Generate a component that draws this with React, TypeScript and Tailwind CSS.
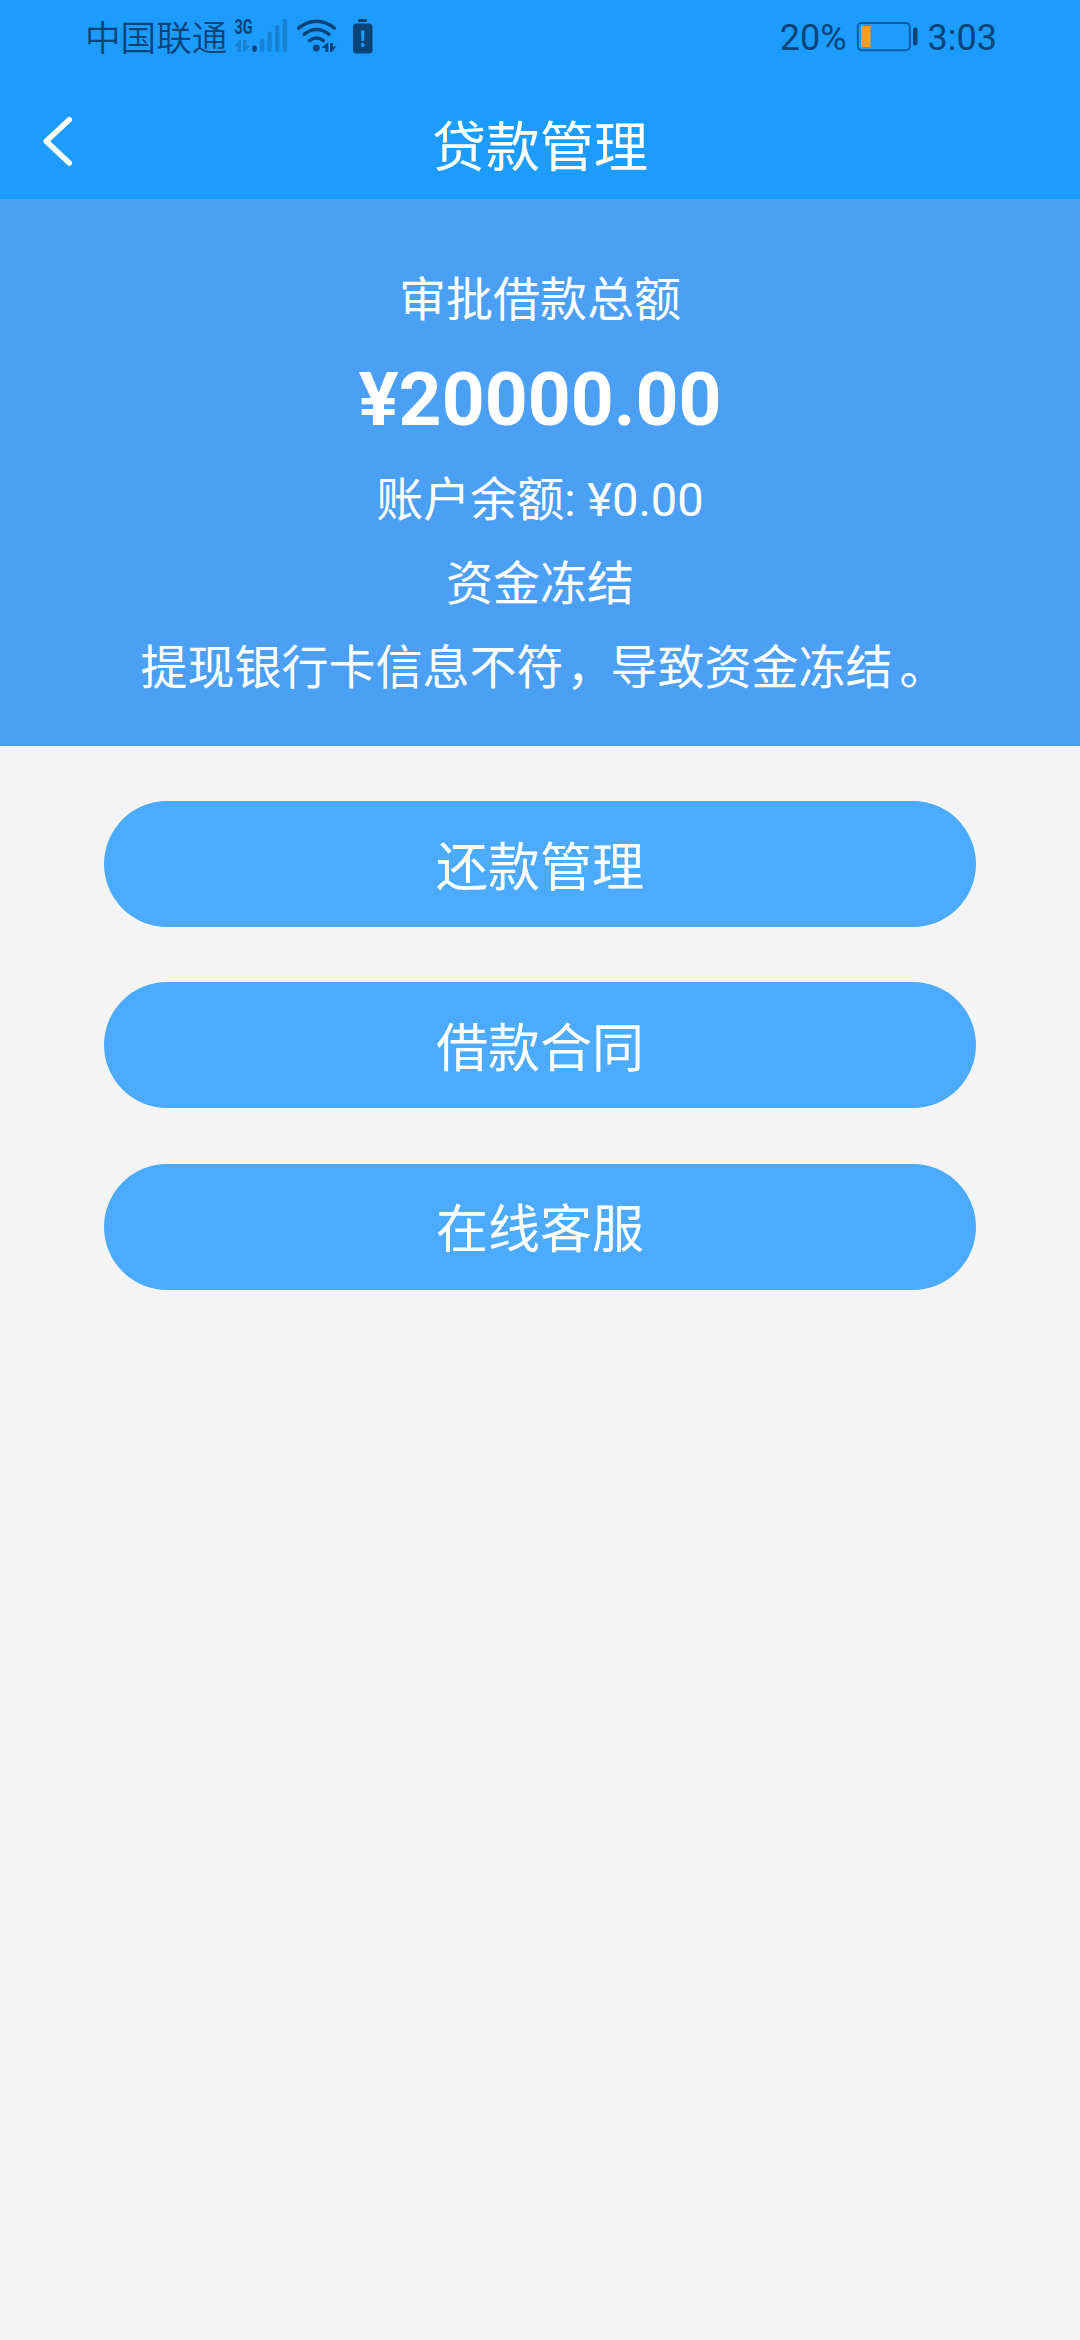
import React from 'react';

const CJK = "font-['Roboto','Noto_Sans_CJK_SC',sans-serif]";

function SignalIcons() {
  return (
    <svg className="ml-[6px] h-[60px] w-[140px]" viewBox="233 0 140 60" fill="none">
      <text x="234.5" y="34" fontFamily="Roboto" fontWeight="700" fontSize="20" textLength="18" lengthAdjust="spacingAndGlyphs" fill="#0b4477">3G</text>
      <g fill="#1781d3">
        <path d="M234 46.500L239.500 40H241V52H237.500V46.500zM243 40H246.500V45.500H250.500L244.500 52H243z" />
        <rect x="260" y="38.500" width="4.500" height="13.500" rx="2" />
        <rect x="267.300" y="31.700" width="4.500" height="20.300" rx="2" />
        <rect x="275" y="25" width="4.500" height="27" rx="2" />
        <rect x="282.700" y="19" width="4.500" height="33" rx="2" />
      </g>
      <rect x="252.300" y="45.500" width="4.500" height="6.500" rx="2" fill="#0b4477" />
      <g stroke="#0b4477" strokeWidth="3.400" strokeLinecap="round">
        <path d="M298.600 28.200Q316.500 14.500 334.400 28.200" />
        <path d="M304 34.300Q316.500 24.500 329 34.300" />
        <path d="M309.500 40.600Q316.500 35.500 323.500 40.600" />
      </g>
      <circle cx="316.300" cy="48" r="3.400" fill="#0b4477" />
      <path d="M321.500 48L327 43H328.300V52H325.300V48zM330 43H333V46.500H336.500L331.500 52H330z" fill="#0b4477" />
      <rect x="358" y="19" width="9" height="3" rx="1" fill="#0b4477" />
      <rect x="353" y="23.500" width="19.500" height="30" rx="3.500" fill="#0b4477" />
      <path d="M361 30.500h3.600l-.6 10.500h-2.400z" fill="#1c9cff" />
      <circle cx="362.800" cy="45" r="1.900" fill="#1c9cff" />
    </svg>
  );
}

function Battery() {
  return (
    <svg className="ml-[9px] h-[60px] w-[63px]" viewBox="855 0 63 60" fill="none">
      <rect x="856.800" y="23" width="52" height="27.200" rx="4" stroke="#0d5a9f" strokeWidth="1.900" />
      <rect x="860" y="26" width="9.500" height="21" rx="1" fill="#ff9d1e" />
      <rect x="912" y="27.500" width="4.500" height="18" rx="2" fill="#0b4477" />
    </svg>
  );
}

function Pill({ label }: { label: string }) {
  return (
    <button className="flex h-[126px] w-[872px] items-center justify-center rounded-full bg-[#4cabff] pt-[9px] text-[52px] leading-none font-normal text-white">
      {label}
    </button>
  );
}

export default function App() {
  return (
    <div className={`${CJK} flex h-[2340px] w-[1080px] flex-col bg-[#f4f4f4] text-white`}>
      <header className="h-[199px] bg-[#1c9cff]">
        <div className="flex h-[75px] items-start pr-[83px] pl-[85px] text-[#0b4477]">
          <span className="pt-[4px] text-[35.6px] leading-[70px] font-[350]">中国联通</span>
          <SignalIcons />
          <span className="ml-auto pt-[3px] text-[36px] leading-[70px]">20%</span>
          <Battery />
          <span className="ml-[9px] pt-[3px] text-[36px] leading-[70px]">3:03</span>
        </div>
        <div className="grid h-[124px] grid-cols-[200px_1fr_200px]">
          <button aria-label="返回" className="flex items-start pt-[40px] pl-[40px]">
            <svg className="h-[54px] w-[36px]" viewBox="40 115 36 54" fill="none" stroke="#fff" strokeWidth="5.500" strokeLinecap="round" strokeLinejoin="round">
              <path d="M69.300 119.700L46.200 141.300L69.300 163" />
            </svg>
          </button>
          <h1 className="pt-[24px] text-center text-[54px] leading-[100px] font-normal">贷款管理</h1>
        </div>
      </header>

      <section className="flex h-[547px] flex-col items-center bg-[#4b9ff5] pt-[61px] text-[47px] leading-[80px]">
        <p>审批借款总额</p>
        <p className="mt-[9px] text-[75px] leading-[100px] font-bold">¥20000.00</p>
        <p className="mt-[11px]">账户余额: ¥0.00</p>
        <p className="mt-[4px]">资金冻结</p>
        <p className="mt-[4px]">
          提现银行卡信息不符<span className="relative left-[3px]">，</span>导致资金冻结
          <span className="relative left-[7px]">。</span>
        </p>
      </section>

      <main className="flex flex-col items-center gap-[55.3px] pt-[55px]">
        <Pill label="还款管理" />
        <Pill label="借款合同" />
        <Pill label="在线客服" />
      </main>
    </div>
  );
}
